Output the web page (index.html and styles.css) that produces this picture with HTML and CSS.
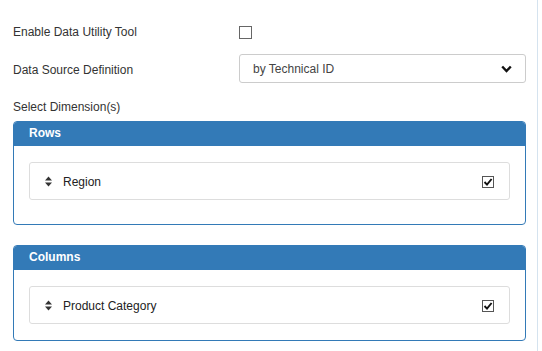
FILE: index.html
```html
<!DOCTYPE html>
<html lang="en">
<head>
    <meta charset="UTF-8">
    <title>Data Utility Tool</title>
    <link rel="stylesheet" href="styles.css">
</head>
<body>
    <div class="page">
        <!-- Enable toggle -->
        <div class="form-row first">
            <label class="form-label">Enable Data Utility Tool</label>
            <span class="box"></span>
        </div>

        <!-- Data source -->
        <div class="form-row select-row">
            <label class="form-label">Data Source Definition</label>
            <div class="select">
                <span>by Technical ID</span>
                <svg class="chevron" width="11" height="8" viewBox="0 0 11 8">
                    <polyline points="1.2,1.5 5.5,6 9.8,1.5" fill="none" stroke="#111" stroke-width="2.4"/>
                </svg>
            </div>
        </div>

        <div class="section-label">Select Dimension(s)</div>

        <!-- Rows -->
        <div class="panel panel-rows">
            <div class="panel-heading">Rows</div>
            <div class="panel-body">
                <div class="dim-item">
                    <svg class="sort" width="7" height="11" viewBox="0 0 7 11">
                        <polygon points="3.5,0.5 7,4.5 0,4.5" fill="#333"/>
                        <polygon points="0,6.5 7,6.5 3.5,10.5" fill="#333"/>
                    </svg>
                    <span class="dim-name">Region</span>
                    <svg class="check" width="12" height="12" viewBox="0 0 12 12">
                        <rect x="0.5" y="0.5" width="11" height="11" fill="#fff" stroke="#555"/>
                        <polyline points="2.5,6 5,8.6 9.6,3" fill="none" stroke="#111" stroke-width="1.9"/>
                    </svg>
                </div>
            </div>
        </div>

        <!-- Columns -->
        <div class="panel">
            <div class="panel-heading">Columns</div>
            <div class="panel-body">
                <div class="dim-item">
                    <svg class="sort" width="7" height="11" viewBox="0 0 7 11">
                        <polygon points="3.5,0.5 7,4.5 0,4.5" fill="#333"/>
                        <polygon points="0,6.5 7,6.5 3.5,10.5" fill="#333"/>
                    </svg>
                    <span class="dim-name">Product Category</span>
                    <svg class="check" width="12" height="12" viewBox="0 0 12 12">
                        <rect x="0.5" y="0.5" width="11" height="11" fill="#fff" stroke="#555"/>
                        <polyline points="2.5,6 5,8.6 9.6,3" fill="none" stroke="#111" stroke-width="1.9"/>
                    </svg>
                </div>
            </div>
        </div>
    </div>
</body>
</html>
```

FILE: styles.css
```css
/* General */
body {
    margin: 0;
    font-family: "Liberation Sans", Arial, sans-serif;
    font-size: 12px;
    color: #333;
    background: #fff;
}
.page {
    width: 538px;
    height: 351px;
    box-sizing: border-box;
    padding-left: 13px;
    border-right: 1px solid #d5e3ef;
    overflow: hidden;
}

/* Form rows */
.form-row {
    display: flex;
    align-items: center;
    width: 513px;
}
.form-row.first {
    margin-top: 20px;
    height: 24px;
}
.form-label {
    width: 226px;
}
.box {
    width: 11px;
    height: 11px;
    border: 1px solid #666;
    margin-top: 1px;
}
.select-row {
    margin-top: 10px;
}
.select-row .form-label {
    padding-top: 3px;
}
.select {
    flex: 1;
    height: 29px;
    box-sizing: border-box;
    border: 1px solid #ccc;
    border-radius: 3px;
    display: flex;
    align-items: center;
    justify-content: space-between;
    padding: 0 13px 0 13px;
    color: #444;
}
.chevron {
    display: block;
    margin-top: 1px;
}
.section-label {
    margin-top: 16px;
    line-height: 16px;
}

/* Panels */
.panel {
    width: 513px;
    box-sizing: border-box;
    border: 1px solid #337ab7;
    border-radius: 4px;
    margin-top: 20px;
    overflow: hidden;
}
.panel-rows {
    margin-top: 6px;
}
.panel-heading {
    height: 24px;
    line-height: 23px;
    background: #337ab7;
    color: #fff;
    font-weight: bold;
    padding-left: 15px;
}
.panel-body {
    padding: 16px 15px 16px 15px;
}
.panel-rows .panel-body {
    padding-bottom: 24px;
}
.dim-item {
    height: 38px;
    box-sizing: border-box;
    border: 1px solid #ddd;
    border-radius: 3px;
    display: flex;
    align-items: center;
    padding: 0 15px;
}
.sort {
    display: block;
    margin-right: 11px;
}
.dim-name {
    flex: 1;
    color: #222;
    padding-top: 1px;
}
.check {
    display: block;
    margin-top: 2px;
}
```
